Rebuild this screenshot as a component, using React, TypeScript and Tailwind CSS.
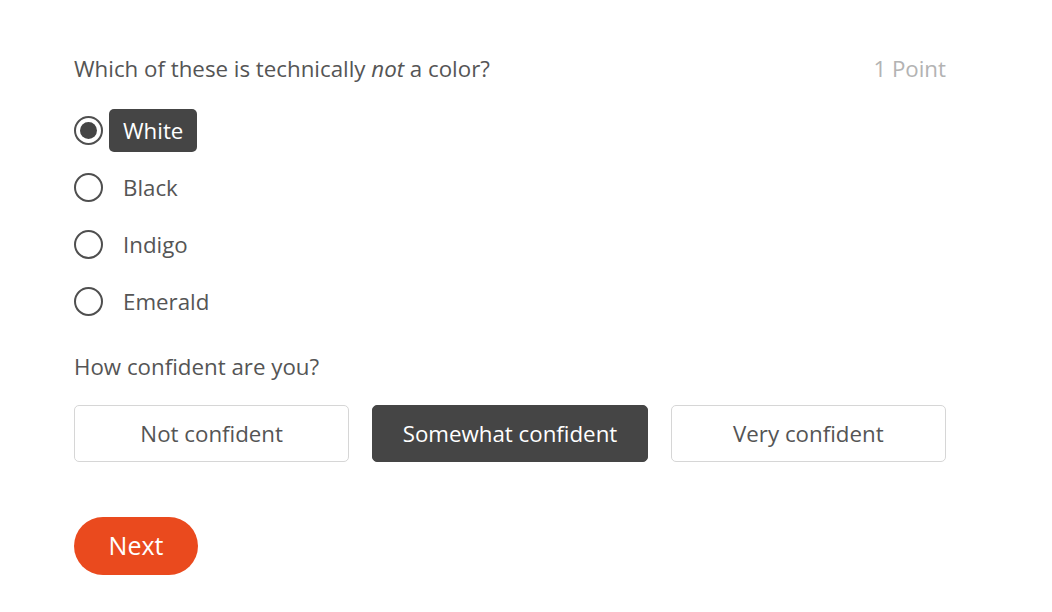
import { useState } from 'react'

const options = ['White', 'Black', 'Indigo', 'Emerald']
const levels = ['Not confident', 'Somewhat confident', 'Very confident']

const Radio = ({ checked }: { checked: boolean }) => (
  <span className="flex size-[29px] shrink-0 items-center justify-center rounded-full border-2 border-[#4f4f4f] bg-white">
    {checked && <span className="size-[17px] rounded-full bg-[#444]" />}
  </span>
)

export default function App() {
  const [answer, setAnswer] = useState('White')
  const [confidence, setConfidence] = useState('Somewhat confident')

  return (
    <div
      className="min-h-[612px] w-full bg-white text-[#555] text-[22.3px]"
      style={{ fontFamily: '"Open Sans", "Liberation Sans", sans-serif' }}
    >
      <div className="w-[872px] ml-[74px] pt-[54px]">
        <div className="flex items-center justify-between leading-[30px]">
          <p>
            Which of these is technically <em>not</em> a color?
          </p>
          <span className="text-[#b3b3b3]">1 Point</span>
        </div>

        <ul className="mt-[25px] flex flex-col gap-[14px]">
          {options.map((o) => {
            const checked = answer === o
            return (
              <li key={o}>
                <button
                  onClick={() => setAnswer(o)}
                  className="flex h-[43px] items-center"
                >
                  <Radio checked={checked} />
                  <span
                    className={
                      checked
                        ? 'ml-[6px] flex h-[43px] items-center rounded-[5px] bg-[#454545] px-[14px] text-white'
                        : 'ml-[6px] flex h-[43px] items-center px-[14px]'
                    }
                  >
                    {o}
                  </span>
                </button>
              </li>
            )
          })}
        </ul>

        <p className="mt-[29px] leading-[30px]">How confident are you?</p>

        <div className="mt-[23px] grid grid-cols-3 gap-[23px]">
          {levels.map((l) => (
            <button
              key={l}
              onClick={() => setConfidence(l)}
              className={
                confidence === l
                  ? 'h-[57px] rounded-[5px] border border-[#454545] bg-[#454545] text-white'
                  : 'h-[57px] rounded-[5px] border border-[#d6d6d6] bg-white'
              }
            >
              {l}
            </button>
          ))}
        </div>

        <button className="mt-[55px] h-[58px] w-[124px] rounded-full bg-[#ea4a1e] text-[25px] text-white">
          Next
        </button>
      </div>
    </div>
  )
}
